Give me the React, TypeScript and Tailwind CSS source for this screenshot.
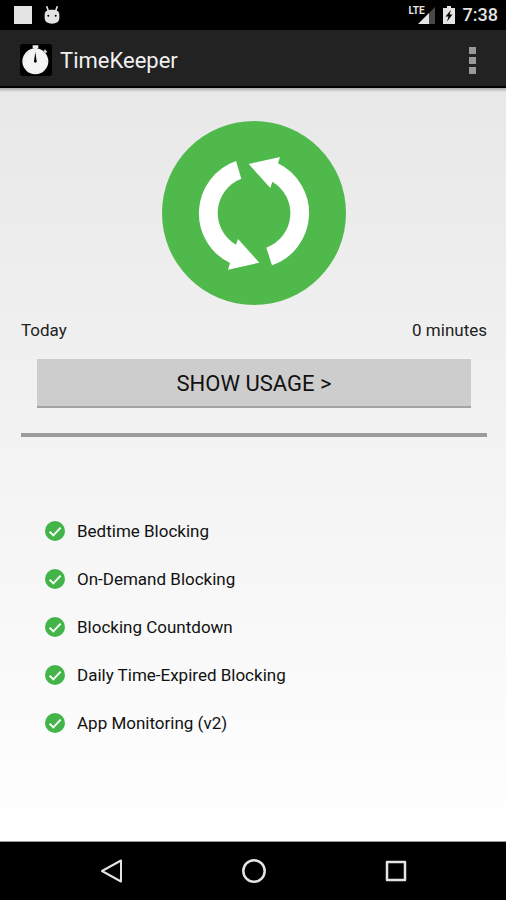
const features = [
  "Bedtime Blocking",
  "On-Demand Blocking",
  "Blocking Countdown",
  "Daily Time-Expired Blocking",
  "App Monitoring (v2)",
];

const StatusBar = () => (
  <div className="flex h-[30px] items-center justify-between bg-black pl-3.5 pr-2 text-[#e4e4e4]">
    <div className="flex items-center gap-3">
      <div className="h-[18px] w-[18px] bg-[#e4e4e4]" />
      <svg className="h-[18px] w-4" viewBox="0 0 48 54" fill="currentColor">
        <path d="M8 1l5 14M40 1l-5 14" stroke="currentColor" strokeWidth="5" />
        <path d="M2 26C2 15 10 11 24 11s22 4 22 15v10c0 11-9 17-22 17S2 47 2 36z" />
        <circle cx="13" cy="29" r="3" fill="#000" />
        <circle cx="35" cy="29" r="3" fill="#000" />
      </svg>
    </div>
    <div className="flex items-center">
      <div className="flex">
        <span className="z-10 font-['Liberation_Sans_Narrow','Roboto',sans-serif] text-[10px] font-bold leading-[10px]">LTE</span>
        <svg className="-ml-2 h-[18px] w-[18px] shrink-0" viewBox="0 0 18 18">
          <path d="M18 1v17h-6V7z" fill="#484848" />
          <path d="M12 7v11H1z" fill="#e4e4e4" />
        </svg>
      </div>
      <svg className="ml-2 h-[18px] w-3" viewBox="0 0 12 18">
        <path d="M4 0h4v2h4v16H0V2h4z" fill="#e4e4e4" />
        <path d="M8 4L2.500 10.500H5.500L4 15.500L9.500 8.500H6.500z" fill="#000" />
      </svg>
      <span className="ml-2 text-[18px] font-medium leading-[30px]">7:38</span>
    </div>
  </div>
);

const StopwatchIcon = () => (
  <svg className="h-8 w-8" viewBox="0 0 96 96">
    <rect width="96" height="96" rx="8" fill="#000" />
    <path d="M38 4h17v9h-4v8h-9v-8h-4z" fill="#eee" />
    <path d="M70 21l5-5 7 7-5 5z" fill="#ccc" />
    <circle cx="46" cy="52" r="39" fill="#f4f4f4" />
    <path d="M46 16v5M46 83v5M10 52h5M77 52h5M21 27l3 3M71 27l-3 3M21 77l3-3M71 77l-3-3" stroke="#ccc" strokeWidth="2" />
    <path d="M46 24l4 28a4 4 0 0 1-8 0z" fill="#000" />
  </svg>
);

const AppBar = () => (
  <header className="flex h-[58px] items-center border-b-2 border-black bg-[#222] pl-5 pr-6 pt-1">
    <StopwatchIcon />
    <h1 className="ml-2 pt-px text-[22px] leading-8 text-[#f0f0f0]">TimeKeeper</h1>
    <button type="button" aria-label="More options" className="ml-auto flex w-5 flex-col items-center gap-[3px]">
      <span className="h-[7px] w-[7px] bg-[#999]" />
      <span className="h-[7px] w-[7px] bg-[#999]" />
      <span className="h-[7px] w-[7px] bg-[#999]" />
    </button>
  </header>
);

const SyncIcon = () => (
  <svg className="h-[184px] w-[184px]" viewBox="35 33 552 552">
    <circle cx="311" cy="309" r="276" fill="#50b94c" />
    <g fill="#fff">
      <path d="M257 153A166 166 0 0 0 239 459L233 479L327 458L263 387L257 404A110 110 0 0 1 273 206Z" />
      <path d="M365 466A166 166 0 0 0 383 160L389 141L295 162L360 234L366 215A110 110 0 0 1 348 413Z" />
    </g>
  </svg>
);

const CheckIcon = () => (
  <svg className="h-5 w-5 shrink-0" viewBox="0 0 60 60">
    <circle cx="30" cy="30" r="30" fill="#42b549" />
    <path d="M14 32l11 11 22-23" fill="none" stroke="#fff" strokeWidth="6" />
  </svg>
);

const NavBar = () => (
  <nav className="flex h-[59px] items-center justify-around border-t border-[#999] bg-black pl-[41px] pr-[39px] text-[#e4e4e4]">
    <button type="button" aria-label="Back">
      <svg className="h-6 w-6" viewBox="0 0 24 24" fill="none" stroke="currentColor" strokeWidth="2" strokeLinejoin="round">
        <path d="M21 1.500v21L2 12z" />
      </svg>
    </button>
    <button type="button" aria-label="Home">
      <svg className="h-6 w-6" viewBox="0 0 24 24" fill="none" stroke="currentColor" strokeWidth="2.500">
        <circle cx="12" cy="12" r="10.700" />
      </svg>
    </button>
    <button type="button" aria-label="Recent apps">
      <svg className="h-6 w-6" viewBox="0 0 24 24" fill="none" stroke="currentColor" strokeWidth="2.500" strokeLinejoin="round">
        <path d="M3 3h18v18H3z" />
      </svg>
    </button>
  </nav>
);

const App = () => {
  return (
    <div className="flex min-h-screen flex-col font-[Roboto,sans-serif]">
      <StatusBar />
      <AppBar />
      <main className="flex flex-1 flex-col bg-linear-to-b from-[#e8e8e8] to-white pl-[21px] pr-[19px] text-[17px] text-[#222]">
        <div className="-ml-[21px] -mr-[19px] h-1 bg-linear-to-b from-[#aaa] to-transparent" />
        <div className="mt-[29px] flex justify-center">
          <SyncIcon />
        </div>

        <div className="mt-[13px] flex justify-between leading-6">
          <span>Today</span>
          <span>0 minutes</span>
        </div>

        <button
          type="button"
          className="mx-4 mt-[17px] h-[49px] border-b-2 border-[#a3a3a3] bg-[#cdcdcd] pt-0.5 text-[22px] text-[#111]"
        >
          SHOW USAGE &gt;
        </button>

        <hr className="mt-[25px] border-t-4 border-[#9c9c9c]" />

        <ul className="mt-[82px] flex flex-col gap-6 px-6 pb-10 text-[#111]">
          {features.map((feature) => (
            <li key={feature} className="flex items-center gap-3 leading-6">
              <CheckIcon />
              <span>{feature}</span>
            </li>
          ))}
        </ul>
      </main>
      <NavBar />
    </div>
  );
};

export default App;
